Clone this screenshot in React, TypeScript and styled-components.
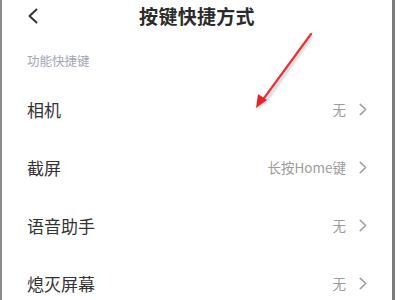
import * as React from "react";
import styled, { createGlobalStyle } from "styled-components";

const GlobalStyle = createGlobalStyle`
    html, body { margin: 0; padding: 0; background: #ffffff; }
    body { font-family: "Noto Sans CJK SC", "Noto Sans", sans-serif; }
`;

interface ShortcutRow {
    label: string,      // name of the function
    value: string,      // the assigned shortcut
}

const rows: ShortcutRow[] = [
    { label: "相机", value: "无" },
    { label: "截屏", value: "长按Home键" },
    { label: "语音助手", value: "无" },
    { label: "熄灭屏幕", value: "无" },
];

const Frame = styled.div`
    position: relative;
    width: 390px;
    height: 300px;
    overflow: hidden;
    background: #ffffff;
    border-left: 2px solid #8a8a8a;
    border-right: 3px solid #7c7c7c;
`;

const Header = styled.header`
    display: grid;
    grid-template-columns: 60px 1fr 60px;
    align-items: center;
    height: 32px;
`;

const BackButton = styled.div`
    display: flex;
    align-items: center;
    padding-left: 26px;
    height: 100%;
`;

const Title = styled.h1`
    margin: 0;
    text-align: center;
    font-size: 19px;
    font-weight: 700;
    color: #2b2b2b;
    letter-spacing: 0.3px;
    line-height: 30px;
`;

const SectionLabel = styled.div`
    padding: 21px 0 11px 25px;
    font-size: 12.5px;
    line-height: 16px;
    color: #a2a6b4;
`;

const Row = styled.div`
    display: flex;
    align-items: center;
    justify-content: space-between;
    height: 58px;
    padding: 0 25px 0 25px;
`;

const RowLabel = styled.span`
    font-size: 17px;
    color: #333333;
`;

const RowValue = styled.span`
    display: flex;
    align-items: center;
    gap: 13px;
    font-size: 13.5px;
    color: #9c9c9c;
`;

const Overlay = styled.svg`
    position: absolute;
    left: 0;
    top: 0;
    pointer-events: none;
`;

// simple open chevron, drawn in pixel units
const Chevron: React.FC<{ dir: "left" | "right", w: number, h: number, color: string, stroke: number }> = ({ dir, w, h, color, stroke }) => {
    const p = stroke / 2 + 0.5;
    const d = dir === "left"
        ? `M${w - p} ${p} L${p} ${h / 2} L${w - p} ${h - p}`
        : `M${p} ${p} L${w - p} ${h / 2} L${p} ${h - p}`;
    return (
        <svg width={w} height={h} viewBox={`0 0 ${w} ${h}`}>
            <path d={d} fill="none" stroke={color} strokeWidth={stroke} strokeLinecap="round" strokeLinejoin="round" />
        </svg>
    );
};

const App: React.FC = () => {
    return (
        <Frame>
            <GlobalStyle />
            <Header>
                <BackButton>
                    <Chevron dir="left" w={10} h={16} color="#333" stroke={2} />
                </BackButton>
                <Title>按键快捷方式</Title>
                <div />
            </Header>
            <SectionLabel>功能快捷键</SectionLabel>
            {rows.map(row => (
                <Row key={row.label}>
                    <RowLabel>{row.label}</RowLabel>
                    <RowValue>
                        {row.value}
                        <Chevron dir="right" w={8} h={13} color="#a0a0a0" stroke={1.6} />
                    </RowValue>
                </Row>
            ))}
            {/* red annotation arrow drawn over the list */}
            <Overlay width="390" height="300">
                <defs>
                    <filter id="shadow" x="-20%" y="-20%" width="140%" height="140%">
                        <feGaussianBlur stdDeviation="1.2" />
                    </filter>
                </defs>
                <g filter="url(#shadow)" opacity="0.35">
                    <line x1="310" y1="36" x2="262" y2="104" stroke="#888" strokeWidth="3" />
                    <polygon points="254,110 258,96 266,102" fill="#888" />
                </g>
                <line x1="309" y1="34" x2="260" y2="101" stroke="#e8333a" strokeWidth="2.2" strokeLinecap="round" />
                <polygon points="254,108 256,94 265,100" fill="#e3262e" />
            </Overlay>
        </Frame>
    );
};

export default App;
